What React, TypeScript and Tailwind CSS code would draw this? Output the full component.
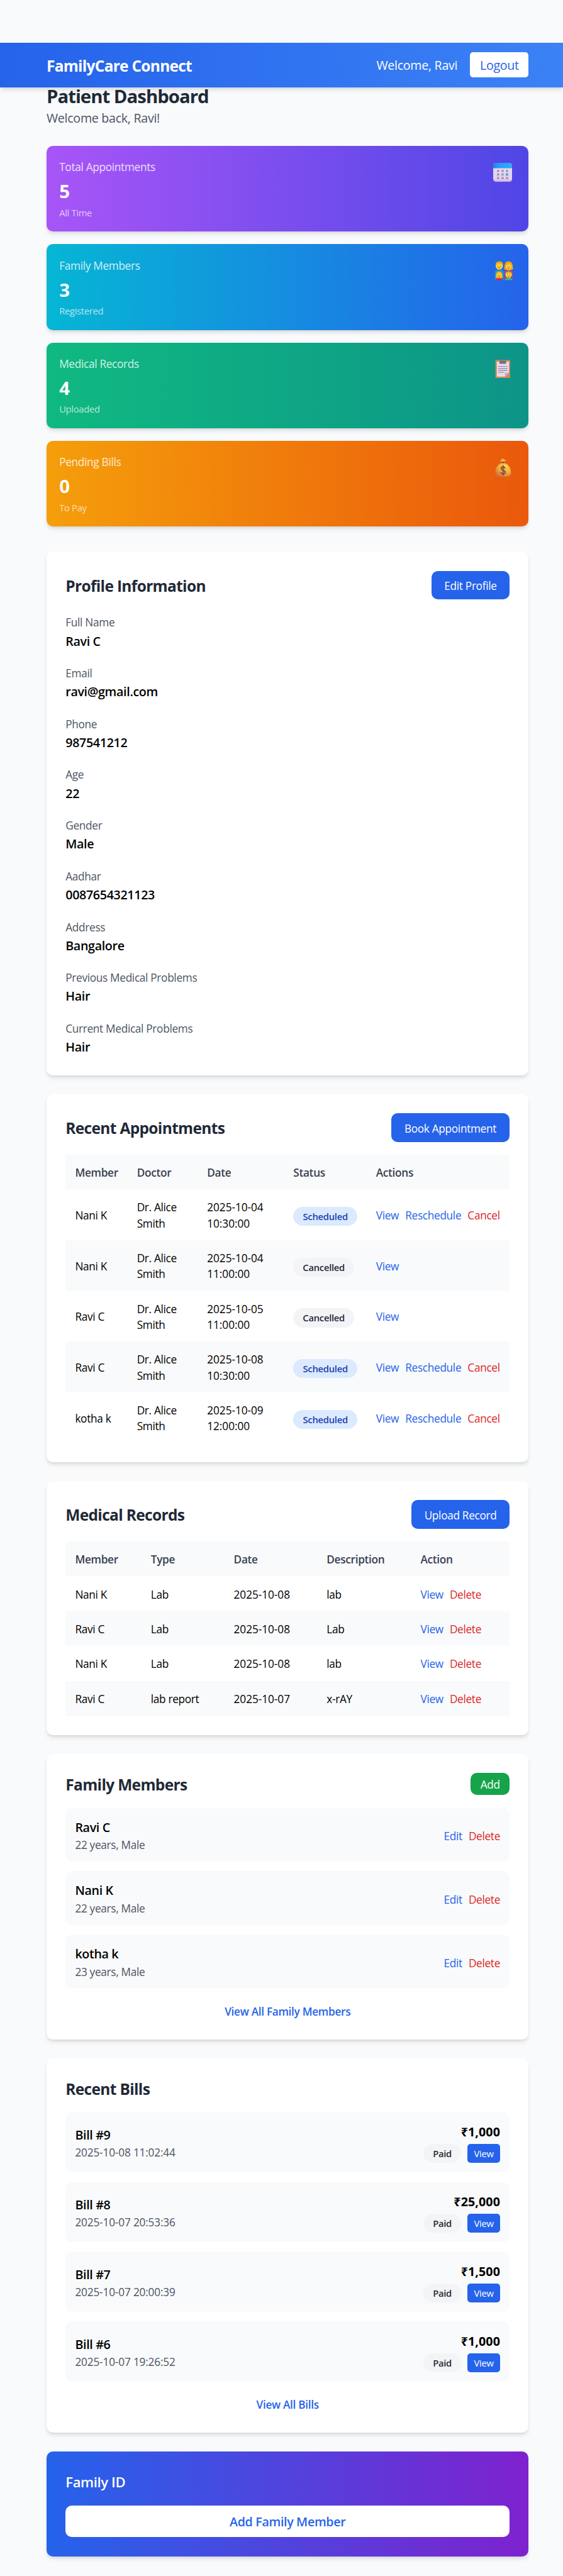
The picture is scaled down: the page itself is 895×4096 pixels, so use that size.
import type { ReactNode } from "react";

const themeCss = `
:root {
  font-size: 20.173px;
  --text-xs: 0.733rem;
  --text-xs--line-height: 1rem;
  --text-sm: 0.855rem;
  --text-sm--line-height: 1.25rem;
  --text-base: 0.977rem;
  --text-base--line-height: 1.5rem;
  --text-lg: 1.098rem;
  --text-lg--line-height: 1.75rem;
  --text-xl: 1.215rem;
  --text-xl--line-height: 1.75rem;
  --text-2xl: 1.455rem;
  --text-2xl--line-height: 2rem;
}`;

const CARD_SHADOW = "shadow-[0_5px_7.5px_-1.25px_rgb(0_0_0/0.1),0_2.5px_5px_-2.5px_rgb(0_0_0/0.1)]";

function CalendarIcon() {
  const cols = [9.3, 17.8, 26.2];
  const rows = [15.3, 22, 28.8];
  return (
    <svg viewBox="0 0 36 36" className="h-6 w-6">
      <defs>
        <linearGradient id="calBody" x1="0" y1="0" x2="0" y2="1">
          <stop offset="0.3" stopColor="#e4d9ee" />
          <stop offset="0.85" stopColor="#e1d0ee" />
          <stop offset="1" stopColor="#cfa8e6" />
        </linearGradient>
        <linearGradient id="calTop" x1="0" y1="0" x2="1" y2="0">
          <stop offset="0" stopColor="#1b7fe6" />
          <stop offset="0.25" stopColor="#2b98fb" />
          <stop offset="1" stopColor="#35a8ff" />
        </linearGradient>
      </defs>
      <rect x="0" y="0" width="36" height="36" rx="6" fill="url(#calBody)" />
      <path d="M0 10V6a6 6 0 0 1 6-6h24a6 6 0 0 1 6 6v4z" fill="url(#calTop)" />
      {rows.map((y, r) =>
        cols.map((x, c) => (
          <rect key={`${r}-${c}`} x={x - 2.1} y={y - 2.1} width="4.2" height="4.2" rx="0.4" fill={r === 1 && c === 2 ? "#2f9bf5" : "#a396b0"} />
        )),
      )}
    </svg>
  );
}

function Face({ cx, cy, r }: { cx: number; cy: number; r: number }) {
  return (
    <g>
      <circle cx={cx} cy={cy} r={r} fill="#ffcb2e" />
      <circle cx={cx - 2.5} cy={cy - 0.2} r="1.25" fill="#fff" />
      <circle cx={cx + 2.5} cy={cy - 0.2} r="1.25" fill="#fff" />
      <circle cx={cx - 2.3} cy={cy} r="0.8" fill="#5a3a2a" />
      <circle cx={cx + 2.3} cy={cy} r="0.8" fill="#5a3a2a" />
      <path d={`M${cx - 1.6} ${cy + 2.8}q1.6 1.8 3.2 0z`} fill="#c9402b" stroke="#c9402b" strokeWidth="0.6" />
    </g>
  );
}

function FamilyIcon() {
  return (
    <svg viewBox="0 0 36 36" className="h-6 w-6 overflow-visible">
      <path d="M3 36V22a5 5 0 0 1 5-5h6.7a5 5 0 0 1 5 5v14z" fill="#2796c4" />
      <path d="M20.3 36V22a5 5 0 0 1 5-5h7.5a5 5 0 0 1 5 5v14z" fill="#7b52ad" />
      <path d="M4.6 11V6.500Q5 1.500 9 1.500q2-1.300 4.500-.5 4.800.6 5 5.500V11z" fill="#f6a70c" />
      <Face cx={11.5} cy={10} r={6.4} />
      <path d="M5.200 7.800Q6 3 11.500 3.200T17.800 7.800q-3-2.300-6.300-2.300T5.200 7.800z" fill="#f9b511" />
      <path d="M20.500 15q1-2 1-6Q22 .6 29.200.6T37 9q0 4 1 6-2.500 3.200-8.800 2.800T20.500 15z" fill="#f3a20e" />
      <Face cx={29.2} cy={10.2} r={5.9} />
      <path d="M23.200 8.500q5-.5 6.800-4.200 1.400 3.600 5.200 4.400Q35 3 29.200 3t-6 5.500z" fill="#f6aa12" />
      <path d="M4.300 31.500q1-1.500 1-5 .3-6.500 6-6.500t6 6.500q0 3.500 1 5-2.500 1.500-7 1.500t-7-1.500z" fill="#f5a60f" />
      <Face cx={11.3} cy={26.8} r={5.4} />
      <path d="M6 25q4-.5 5.300-3.400Q13 24.500 16.600 25 16 20.600 11.300 20.600T6 25z" fill="#f9b817" />
      <path d="M4 36q.5-3.600 7.300-3.600T18.700 36z" fill="#e0243f" />
      <path d="M23 27v-2.500q.6-4.800 6.300-4.800t6.300 4.800V27z" fill="#f2a20e" />
      <Face cx={29.3} cy={26.6} r={5.7} />
      <path d="M23.600 25Q24.500 21 29.300 21t5.700 4q-2.800-1.800-5.700-1.800T23.600 25z" fill="#f7ae12" />
      <path d="M22 36q.5-3.600 7.300-3.600T36.700 36z" fill="#2cc66d" />
    </svg>
  );
}

function ClipboardIcon() {
  return (
    <svg viewBox="0 0 36 36" className="h-6 w-6">
      <rect x="4.300" y="1.900" width="27.700" height="33.800" rx="1.300" fill="#d98c52" />
      <path d="M8 4.700h20.800a1 1 0 0 1 1 1V25.500L22.200 33H8a1 1 0 0 1-1-1V5.700a1 1 0 0 1 1-1z" fill="#e6dcf1" />
      <path d="M22.200 33v-6.300a1.200 1.200 0 0 1 1.200-1.200h6.400z" fill="#bdb3cc" />
      <path d="M9.300 13.700h17.800M9.300 17.700h17.800M9.300 21.600h17.800M9.300 25.300h11.500" stroke="#8f829c" strokeWidth="1.400" />
      <circle cx="18" cy="2.300" r="2" fill="#8a7c8c" />
      <rect x="11.700" y="2.900" width="13" height="5.900" rx="1" fill="#7c6e80" />
      <circle cx="18" cy="2.600" r="0.700" fill="#c48a63" />
    </svg>
  );
}

function MoneyBagIcon() {
  return (
    <svg viewBox="0 0 36 36" className="h-6 w-6">
      <defs>
        <radialGradient id="bag" cx="0.68" cy="0.25" r="0.85">
          <stop offset="0" stopColor="#ffd54a" />
          <stop offset="0.55" stopColor="#f0ab3c" />
          <stop offset="1" stopColor="#c86f3e" />
        </radialGradient>
      </defs>
      <path d="M13.500 3.600q1.800.3 2.800-.8 1-2 2.100-2 1.200 0 2.100 2 1 1.100 3 .8.700 1.600-1.600 4.400h-6.800q-2.300-2.800-1.600-4.400z" fill="#f2ac45" />
      <path d="M15.400 9.500h6.300Q33.700 15.500 33.700 27q0 9-8 9H11.500q-7.700 0-7.700-9 0-11.500 11.600-17.500z" fill="url(#bag)" />
      <rect x="14.900" y="7.500" width="7.300" height="2.700" rx="1.300" fill="#8a4c3c" />
      <path d="M22.400 19.500q-.6-2.300-3.600-2.300-3.500 0-3.500 2.900 0 2.300 3.500 3.300 4 1 4 3.900 0 3-3.900 3-3.400 0-4.100-2.700M18.800 15v17.800" fill="none" stroke="#8a4a3c" strokeWidth="2.200" strokeLinecap="round" />
    </svg>
  );
}

const stats = [
  { label: "Total Appointments", value: "5", sub: "All Time", icon: <CalendarIcon />, tone: "from-[#a855f7] to-[#4f46e5]" },
  { label: "Family Members", value: "3", sub: "Registered", icon: <FamilyIcon />, tone: "from-[#06b6d4] to-[#2563eb]" },
  { label: "Medical Records", value: "4", sub: "Uploaded", icon: <ClipboardIcon />, tone: "from-[#10b981] to-[#0d9488]" },
  { label: "Pending Bills", value: "0", sub: "To Pay", icon: <MoneyBagIcon />, tone: "from-[#f59e0b] to-[#ea580c]" },
];

const profile = [
  ["Full Name", "Ravi C"],
  ["Email", "ravi@gmail.com"],
  ["Phone", "987541212"],
  ["Age", "22"],
  ["Gender", "Male"],
  ["Aadhar", "0087654321123"],
  ["Address", "Bangalore"],
  ["Previous Medical Problems", "Hair"],
  ["Current Medical Problems", "Hair"],
];

const appointments = [
  { member: "Nani K", day: "2025-10-04", time: "10:30:00", status: "Scheduled" },
  { member: "Nani K", day: "2025-10-04", time: "11:00:00", status: "Cancelled" },
  { member: "Ravi C", day: "2025-10-05", time: "11:00:00", status: "Cancelled" },
  { member: "Ravi C", day: "2025-10-08", time: "10:30:00", status: "Scheduled" },
  { member: "kotha k", day: "2025-10-09", time: "12:00:00", status: "Scheduled" },
];

const records = [
  ["Nani K", "Lab", "2025-10-08", "lab"],
  ["Ravi C", "Lab", "2025-10-08", "Lab"],
  ["Nani K", "Lab", "2025-10-08", "lab"],
  ["Ravi C", "lab report", "2025-10-07", "x-rAY"],
];

const family = [
  ["Ravi C", "22 years, Male"],
  ["Nani K", "22 years, Male"],
  ["kotha k", "23 years, Male"],
];

const bills = [
  ["Bill #9", "2025-10-08 11:02:44", "₹1,000"],
  ["Bill #8", "2025-10-07 20:53:36", "₹25,000"],
  ["Bill #7", "2025-10-07 20:00:39", "₹1,500"],
  ["Bill #6", "2025-10-07 19:26:52", "₹1,000"],
];

function Card({ title, action, children }: { title: string; action?: ReactNode; children: ReactNode }) {
  return (
    <section className={`rounded-lg bg-white p-6 ${CARD_SHADOW}`}>
      <div className="mb-4 flex items-center justify-between">
        <h2 className="-mb-px pt-px text-xl font-bold tracking-[-0.027em] text-[#1f2937]">{title}</h2>
        {action}
      </div>
      {children}
    </section>
  );
}

function PrimaryButton({ width, children }: { width: string; children: ReactNode }) {
  return <button className={`${width} h-9 rounded-lg bg-[#2563eb] pt-0.5 text-center text-sm text-white`}>{children}</button>;
}

const link = "text-[#2563eb]";
const danger = "text-[#dc2626]";
const cell = "px-3 pt-[calc(0.75rem+1px)] pb-[calc(0.75rem-1px)]";
const th = `${cell} text-left font-semibold tracking-[-0.018em] text-[#374151]`;

export default function App() {
  return (
    <div className="min-h-[4096px] bg-[#f9fafb] pt-[68px] font-['Open_Sans','Noto_Sans',sans-serif] text-base tracking-[-0.016em] text-black">
      <style>{themeCss}</style>

      <header className={`relative z-10 flex h-14 items-center justify-between bg-linear-to-r/srgb from-[#2563eb] to-[#3b82f6] pr-[54.6px] pl-[74px] text-white ${CARD_SHADOW}`}>
        <span className="-mb-px pt-px text-xl font-bold tracking-[-0.03em]">FamilyCare Connect</span>
        <div className="flex items-center gap-4">
          <span className="-mb-px pt-px">Welcome, Ravi</span>
          <button className="h-8 w-[93px] rounded bg-white pt-0.5 text-center text-[#2563eb]">Logout</button>
        </div>
      </header>

      <main className="-mt-[7.4px] pr-[54.6px] pl-[74px]">
        <div className="mb-6">
          <h1 className="-mb-px pt-[2px] text-2xl font-bold tracking-[-0.034em] text-[#1f2937]">Patient Dashboard</h1>
          <p className="-mb-px text-[#4b5563]">Welcome back, Ravi!</p>
        </div>

        <div className="mb-8 grid gap-4">
          {stats.map((s) => (
            <div key={s.label} className={`flex items-start justify-between rounded-lg bg-linear-to-r/srgb p-4 text-white ${s.tone} ${CARD_SHADOW}`}>
              <div>
                <p className="-mb-px pt-px text-sm text-white/80">{s.label}</p>
                <p className="mt-1 -mb-[2px] pt-[2px] text-2xl font-bold">{s.value}</p>
                <p className="mt-1 text-xs text-white/70">{s.sub}</p>
              </div>
              <div className="mt-[6.5px] mr-[6px]">{s.icon}</div>
            </div>
          ))}
        </div>

        <div className="flex flex-col gap-6">
          <Card title="Profile Information" action={<PrimaryButton width="w-[124.400px]">Edit Profile</PrimaryButton>}>
            <div className="-mb-px grid gap-4 pt-px">
              {profile.map(([label, value]) => (
                <div key={label}>
                  <div>
                    <span className="text-sm text-[#4b5563]">{label}</span>
                  </div>
                  <p className="font-semibold tracking-[-0.018em]">{value}</p>
                </div>
              ))}
            </div>
          </Card>

          <Card title="Recent Appointments" action={<PrimaryButton width="w-[188.300px]">Book Appointment</PrimaryButton>}>
            <table className="w-full table-fixed text-sm">
              <colgroup>
                <col className="w-[98.300px]" />
                <col className="w-[111.600px]" />
                <col className="w-[137px]" />
                <col className="w-[131.500px]" />
                <col />
              </colgroup>
              <thead className="bg-[#f9fafb]">
                <tr>
                  <th className={th}>Member</th>
                  <th className={th}>Doctor</th>
                  <th className={th}>Date</th>
                  <th className={th}>Status</th>
                  <th className={th}>Actions</th>
                </tr>
              </thead>
              <tbody>
                {appointments.map((a) => (
                  <tr key={a.day + a.time} className="even:bg-[#f9fafb]">
                    <td className={cell}>{a.member}</td>
                    <td className={cell}>
                      Dr. Alice
                      <br />
                      Smith
                    </td>
                    <td className={`${cell} tracking-[-0.003em]`}>
                      {a.day}
                      <br />
                      {a.time}
                    </td>
                    <td className="p-3">
                      <span className={`mt-1 inline-block rounded-full py-1 text-center text-xs font-semibold tracking-[-0.018em] ${a.status === "Scheduled" ? "w-[101.800px] bg-[#dbeafe] text-[#1e40af]" : "w-[96.800px] bg-[#f3f4f6] text-[#1f2937]"}`}>
                        {a.status}
                      </span>
                    </td>
                    <td className={cell}>
                      <div className="flex gap-2">
                        <a className={link}>View</a>
                        {a.status === "Scheduled" && (
                          <>
                            <a className={link}>Reschedule</a>
                            <a className={danger}>Cancel</a>
                          </>
                        )}
                      </div>
                    </td>
                  </tr>
                ))}
              </tbody>
            </table>
          </Card>

          <Card title="Medical Records" action={<PrimaryButton width="w-[156.200px]">Upload Record</PrimaryButton>}>
            <table className="w-full table-fixed text-sm">
              <colgroup>
                <col className="w-[120.400px]" />
                <col className="w-[131.800px]" />
                <col className="w-[147.700px]" />
                <col className="w-[149.200px]" />
                <col />
              </colgroup>
              <thead className="bg-[#f9fafb]">
                <tr>
                  <th className={th}>Member</th>
                  <th className={th}>Type</th>
                  <th className={th}>Date</th>
                  <th className={th}>Description</th>
                  <th className={th}>Action</th>
                </tr>
              </thead>
              <tbody>
                {records.map(([member, type, date, description], i) => (
                  <tr key={i} className="even:bg-[#f9fafb]">
                    <td className={cell}>{member}</td>
                    <td className={cell}>{type}</td>
                    <td className={`${cell} tracking-[-0.003em]`}>{date}</td>
                    <td className={cell}>{description}</td>
                    <td className={cell}>
                      <div className="flex gap-2">
                        <a className={link}>View</a>
                        <a className={danger}>Delete</a>
                      </div>
                    </td>
                  </tr>
                ))}
              </tbody>
            </table>
          </Card>

          <Card title="Family Members" action={<button className="h-7 w-[62px] rounded-lg bg-[#16a34a] pt-0.5 text-center text-sm text-white">Add</button>}>
            <div className="grid gap-3">
              {family.map(([name, info]) => (
                <div key={name} className="flex items-center justify-between rounded-lg bg-[#f9fafb] p-3">
                  <div className="-mb-px pt-px">
                    <p className="font-semibold tracking-[-0.018em]">{name}</p>
                    <p className="text-sm text-[#4b5563]">{info}</p>
                  </div>
                  <div className="flex gap-2 pt-1 text-sm">
                    <a className={link}>Edit</a>
                    <a className={danger}>Delete</a>
                  </div>
                </div>
              ))}
            </div>
            <div className="mt-4 -mb-px pt-px text-center">
              <a className="text-sm font-semibold tracking-[-0.018em] text-[#2563eb]">View All Family Members</a>
            </div>
          </Card>

          <Card title="Recent Bills">
            <div className="grid gap-3">
              {bills.map(([name, date, amount]) => (
                <div key={name} className="flex items-center justify-between rounded-lg bg-[#f9fafb] p-3">
                  <div className="-mb-px pt-px">
                    <p className="font-semibold tracking-[-0.018em]">{name}</p>
                    <p className="text-sm tracking-[-0.010em] text-[#4b5563]">{date}</p>
                  </div>
                  <div className="text-right">
                    <p className="-mb-px pt-px font-bold tracking-[0.004em]">{amount}</p>
                    <div className="mt-1 flex justify-end gap-2 text-xs">
                      <span className="flex h-6 w-[59.700px] items-center justify-center rounded-full bg-[#f3f4f6] font-semibold text-[#1f2937]">Paid</span>
                      <button className="flex h-6 w-[52px] items-center justify-center rounded bg-[#2563eb] text-white">View</button>
                    </div>
                  </div>
                </div>
              ))}
            </div>
            <div className="mt-4 -mb-px pt-px text-center">
              <a className="text-sm font-semibold tracking-[-0.018em] text-[#2563eb]">View All Bills</a>
            </div>
          </Card>

          <section className={`rounded-lg bg-linear-to-r/srgb from-[#2563eb] to-[#7e22ce] p-6 ${CARD_SHADOW}`}>
            <h2 className="mb-[calc(1rem-1px)] pt-px text-lg font-semibold tracking-[-0.018em] text-white">Family ID</h2>
            <button className="h-10 w-full rounded-lg bg-white pt-0.5 text-center font-semibold tracking-[-0.018em] text-[#2563eb]">Add Family Member</button>
          </section>
        </div>
      </main>
    </div>
  );
}
